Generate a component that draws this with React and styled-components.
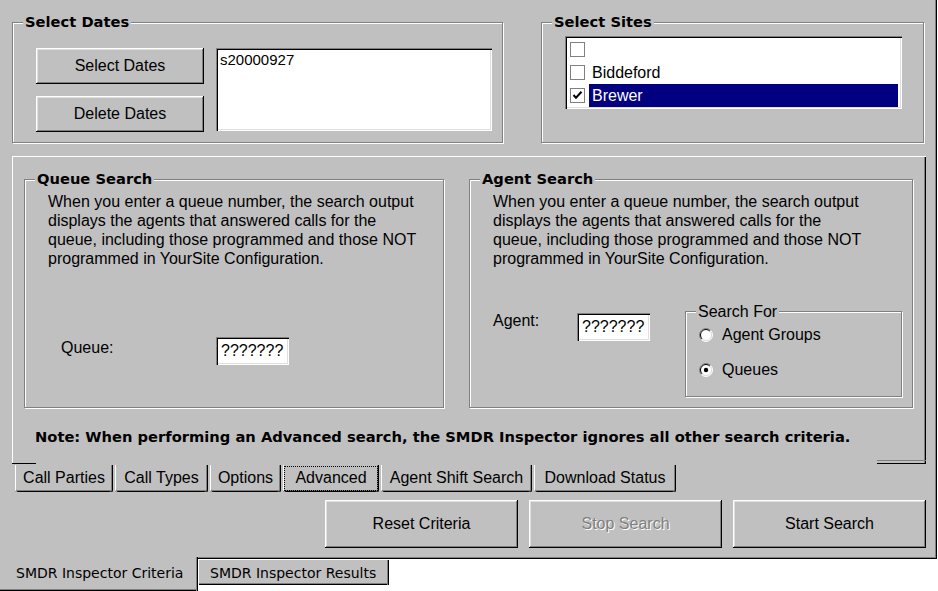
import React from 'react';
import styled, { createGlobalStyle, css } from 'styled-components';

// Win9x style dialog: SMDR Inspector criteria page

const GlobalStyle = createGlobalStyle`
    html, body {
        margin: 0;
        padding: 0;
        background: #fff;
    }
    body {
        font-family: "Liberation Sans", Arial, sans-serif;
        font-size: 16px;
        color: #000;
    }
    * {
        box-sizing: border-box;
    }
`;

const BOLD_FONT = `"DejaVu Sans", Verdana, sans-serif`;

const raised = css`
    box-shadow: inset -1px -1px #000, inset 1px 1px #fff,
        inset -2px -2px #808080, inset 2px 2px #dfdfdf;
`;

const sunken = css`
    box-shadow: inset 1px 1px #808080, inset 2px 2px #000,
        inset -1px -1px #fff, inset -2px -2px #dfdfdf;
`;

const Window = styled.div`
    width: 937px;
    height: 559px;
    background: #c0c0c0;
    box-shadow: inset -1px -1px #000, inset -2px -2px #808080;
    display: flex;
    flex-direction: column;
    padding: 22px 11px 0 12px;
`;

const TopRow = styled.div`
    display: flex;
    gap: 38px;
`;

// etched frame with a caption sitting on the top line
const GroupBox = styled.div`
    position: relative;
    flex: none;
    width: ${(p) => p.$w}px;
    height: ${(p) => p.$h}px;
    margin-left: ${(p) => p.$left || 0}px;
    border: 1px solid #808080;
    box-shadow: 1px 1px #fff, inset 1px 1px #fff;
    padding: ${(p) => p.$pad || '0'};
`;

const Caption = styled.span`
    position: absolute;
    top: -10px;
    left: 10px;
    padding: 0 2px;
    background: #c0c0c0;
    white-space: nowrap;
    ${(p) =>
        p.$plain
            ? css`
                  font-size: 16px;
                  line-height: 19px;
              `
            : css`
                  font-family: ${BOLD_FONT};
                  font-weight: bold;
                  font-size: 14.7px;
                  line-height: 17px;
              `}
`;

const DatesBody = styled.div`
    display: flex;
    gap: 12px;
`;

const ButtonStack = styled.div`
    display: flex;
    flex-direction: column;
    gap: 12px;
`;

const Button = styled.div`
    width: ${(p) => p.$w}px;
    height: ${(p) => p.$h}px;
    display: flex;
    align-items: center;
    justify-content: center;
    background: #c0c0c0;
    font-size: 16px;
    white-space: nowrap;
    ${raised}
    ${(p) =>
        p.$disabled &&
        css`
            color: #808080;
            text-shadow: 1px 1px #fff;
        `}
`;

const ListBox = styled.div`
    width: ${(p) => p.$w}px;
    height: ${(p) => p.$h}px;
    background: #fff;
    padding: ${(p) => p.$pad || '2px'};
    font-size: ${(p) => p.$fs || 16}px;
    line-height: 19px;
    ${sunken}
`;

const SiteRow = styled.div`
    display: flex;
    align-items: center;
    height: 23px;
`;

const CheckBox = styled.span`
    flex: none;
    width: 15px;
    height: 15px;
    border: 1px solid #808080;
    background: #fff;
    display: flex;
    align-items: center;
    justify-content: center;
`;

const SiteName = styled.span`
    flex: 1;
    margin: 0 2px 0 4px;
    height: 23px;
    display: flex;
    align-items: center;
    padding-left: 3px;
    ${(p) =>
        p.$selected &&
        css`
            background: #000080;
            color: #fff;
        `}
`;

const TabPanel = styled.div`
    position: relative;
    margin-top: 13px;
    width: 914px;
    height: 308px;
    padding: 23px 0 0 12px;
    box-shadow: inset 1px 0 #fff, inset 0 1px #fff, inset -1px 0 #000,
        inset -2px 0 #808080;

    &::before {
        content: '';
        position: absolute;
        left: 0;
        bottom: 0;
        width: 24px;
        height: 1px;
        background: #000;
    }
    &::after {
        content: '';
        position: absolute;
        right: 0;
        bottom: 0;
        width: 49px;
        height: 2px;
        border-top: 1px solid #808080;
        border-bottom: 1px solid #000;
    }
`;

const GroupRow = styled.div`
    display: flex;
    gap: 25px;
`;

const Description = styled.p`
    margin: 0;
    font-size: 16px;
    line-height: 19px;
    white-space: nowrap;
`;

const FieldRow = styled.div`
    display: flex;
    align-items: flex-start;
    margin-top: ${(p) => p.$top}px;
    padding-left: ${(p) => p.$indent || 0}px;
`;

const FieldLabel = styled.span`
    flex: none;
    width: ${(p) => p.$w}px;
    margin-top: ${(p) => p.$top || 0}px;
    line-height: 19px;
`;

const TextBox = styled.div`
    flex: none;
    width: 73px;
    height: 28px;
    margin-top: ${(p) => p.$top || 0}px;
    background: #fff;
    padding: 0 0 0 5px;
    display: flex;
    align-items: center;
    font-size: 16px;
    overflow: hidden;
    ${sunken}
`;

const RadioList = styled.div`
    display: flex;
    flex-direction: column;
    gap: 15px;
`;

const RadioRow = styled.div`
    display: flex;
    align-items: center;
    height: 20px;
    gap: 9px;
`;

const Note = styled.div`
    margin: 20px 0 0 11px;
    font-family: ${BOLD_FONT};
    font-weight: bold;
    font-size: 14.7px;
    line-height: 17px;
    white-space: nowrap;
`;

const TabStrip = styled.div`
    display: flex;
    gap: 2px;
    margin-top: 1px;
    padding-left: 3px;
`;

const Tab = styled.div`
    width: ${(p) => p.$w}px;
    height: 27px;
    display: flex;
    align-items: center;
    justify-content: center;
    padding-bottom: 2px;
    white-space: nowrap;
    background: #c0c0c0;
    box-shadow: inset 1px 0 #fff, inset -1px 0 #000, inset -2px 0 #808080,
        inset 0 -1px #000, inset 0 -2px #808080;
    border-radius: 0 0 2px 2px;
    ${(p) =>
        p.$focused &&
        css`
            outline: 1px dotted #000;
            outline-offset: -2px;
        `}
`;

const ButtonRow = styled.div`
    display: flex;
    justify-content: flex-end;
    gap: 11px;
    margin-top: 8px;
`;

const PageTabs = styled.div`
    display: flex;
    align-items: flex-start;
    margin-top: -2px;
    font-family: ${BOLD_FONT};
    font-size: 14px;
    line-height: 17px;
`;

const PageTab = styled.div`
    width: ${(p) => p.$w}px;
    height: ${(p) => (p.$active ? 34 : 26)}px;
    margin-top: ${(p) => (p.$active ? 0 : 2)}px;
    padding: ${(p) => (p.$active ? '8px 0 0 16px' : '6px 0 0 12px')};
    background: #c0c0c0;
    white-space: nowrap;
    box-shadow: ${(p) => (p.$active ? '' : 'inset 1px 1px #fff,')} inset -1px 0 #000,
        inset -2px 0 #808080, inset 0 -1px #000, inset 0 -2px #808080;
`;

const CheckMark = () => (
    <svg width="11" height="11" viewBox="0 0 11 11">
        <polyline points="1.5,5 4,7.8 9.5,1.8" fill="none" stroke="#000" strokeWidth="2" />
    </svg>
);

const Radio = ({ checked }) => (
    <svg width="14" height="14" viewBox="0 0 14 14">
        <circle cx="7" cy="7" r="6" fill="#fff" />
        <path d="M2.4 11.6 A6.5 6.5 0 0 1 11.6 2.4" fill="none" stroke="#808080" />
        <path d="M11.6 2.4 A6.5 6.5 0 0 1 2.4 11.6" fill="none" stroke="#fff" />
        <path d="M3.1 10.9 A5.5 5.5 0 0 1 10.9 3.1" fill="none" stroke="#000" />
        <path d="M10.9 3.1 A5.5 5.5 0 0 1 3.1 10.9" fill="none" stroke="#dfdfdf" />
        {checked && <circle cx="7" cy="7" r="2.2" fill="#000" />}
    </svg>
);

const sites = [
    { name: '', checked: false },
    { name: 'Biddeford', checked: false },
    { name: 'Brewer', checked: true },
];

const tabs = [
    { label: 'Call Parties', w: 98 },
    { label: 'Call Types', w: 93 },
    { label: 'Options', w: 71 },
    { label: 'Advanced', w: 96, focused: true },
    { label: 'Agent Shift Search', w: 151 },
    { label: 'Download Status', w: 142 },
];

const descLines = [
    'When you enter a queue number, the search output',
    'displays the agents that answered calls for the',
    'queue, including those programmed and those NOT',
    'programmed in YourSite Configuration.',
];

const SearchText = () => (
    <Description>
        {descLines.map((line, i) => (
            <React.Fragment key={i}>
                {line}
                {i < descLines.length - 1 && <br />}
            </React.Fragment>
        ))}
    </Description>
);

export default function App() {
    return (
        <>
            <GlobalStyle />
            <Window>
                <TopRow>
                    <GroupBox $w={491} $h={121} $pad="25px 0 0 23px">
                        <Caption>Select Dates</Caption>
                        <DatesBody>
                            <ButtonStack>
                                <Button $w={168} $h={36}>Select Dates</Button>
                                <Button $w={168} $h={36}>Delete Dates</Button>
                            </ButtonStack>
                            <ListBox $w={276} $h={83} $pad="2px 4px" $fs={15}>
                                s20000927
                            </ListBox>
                        </DatesBody>
                    </GroupBox>
                    <GroupBox $w={383} $h={121} $pad="13px 0 0 23px">
                        <Caption>Select Sites</Caption>
                        <ListBox $w={337} $h={73} $pad="2px 2px 2px 5px">
                            {sites.map((s, i) => (
                                <SiteRow key={i}>
                                    <CheckBox>{s.checked && <CheckMark />}</CheckBox>
                                    <SiteName $selected={s.checked}>{s.name}</SiteName>
                                </SiteRow>
                            ))}
                        </ListBox>
                    </GroupBox>
                </TopRow>

                <TabPanel>
                    <GroupRow>
                        <GroupBox $w={420} $h={229} $pad="12px 0 0 23px">
                            <Caption>Queue Search</Caption>
                            <SearchText />
                            <FieldRow $top={69} $indent={13}>
                                <FieldLabel $w={155} $top={1}>Queue:</FieldLabel>
                                <TextBox>???????</TextBox>
                            </FieldRow>
                        </GroupBox>
                        <GroupBox $w={444} $h={229} $pad="12px 0 0 23px">
                            <Caption>Agent Search</Caption>
                            <SearchText />
                            <FieldRow $top={43}>
                                <FieldLabel $w={84}>Agent:</FieldLabel>
                                <TextBox $top={2}>???????</TextBox>
                                <GroupBox $w={217} $h={86} $left={35} $pad="13px 0 0 13px">
                                    <Caption $plain>Search For</Caption>
                                    <RadioList>
                                        <RadioRow>
                                            <Radio />
                                            Agent Groups
                                        </RadioRow>
                                        <RadioRow>
                                            <Radio checked />
                                            Queues
                                        </RadioRow>
                                    </RadioList>
                                </GroupBox>
                            </FieldRow>
                        </GroupBox>
                    </GroupRow>
                    <Note>
                        Note: When performing an Advanced search, the SMDR Inspector ignores all
                        other search criteria.
                    </Note>
                </TabPanel>

                <TabStrip>
                    {tabs.map((t) => (
                        <Tab key={t.label} $w={t.w} $focused={t.focused}>
                            {t.label}
                        </Tab>
                    ))}
                </TabStrip>

                <ButtonRow>
                    <Button $w={193} $h={48}>Reset Criteria</Button>
                    <Button $w={193} $h={48} $disabled>Stop Search</Button>
                    <Button $w={193} $h={48}>Start Search</Button>
                </ButtonRow>
            </Window>
            <PageTabs>
                <PageTab $w={198} $active>SMDR Inspector Criteria</PageTab>
                <PageTab $w={191}>SMDR Inspector Results</PageTab>
            </PageTabs>
        </>
    );
}
